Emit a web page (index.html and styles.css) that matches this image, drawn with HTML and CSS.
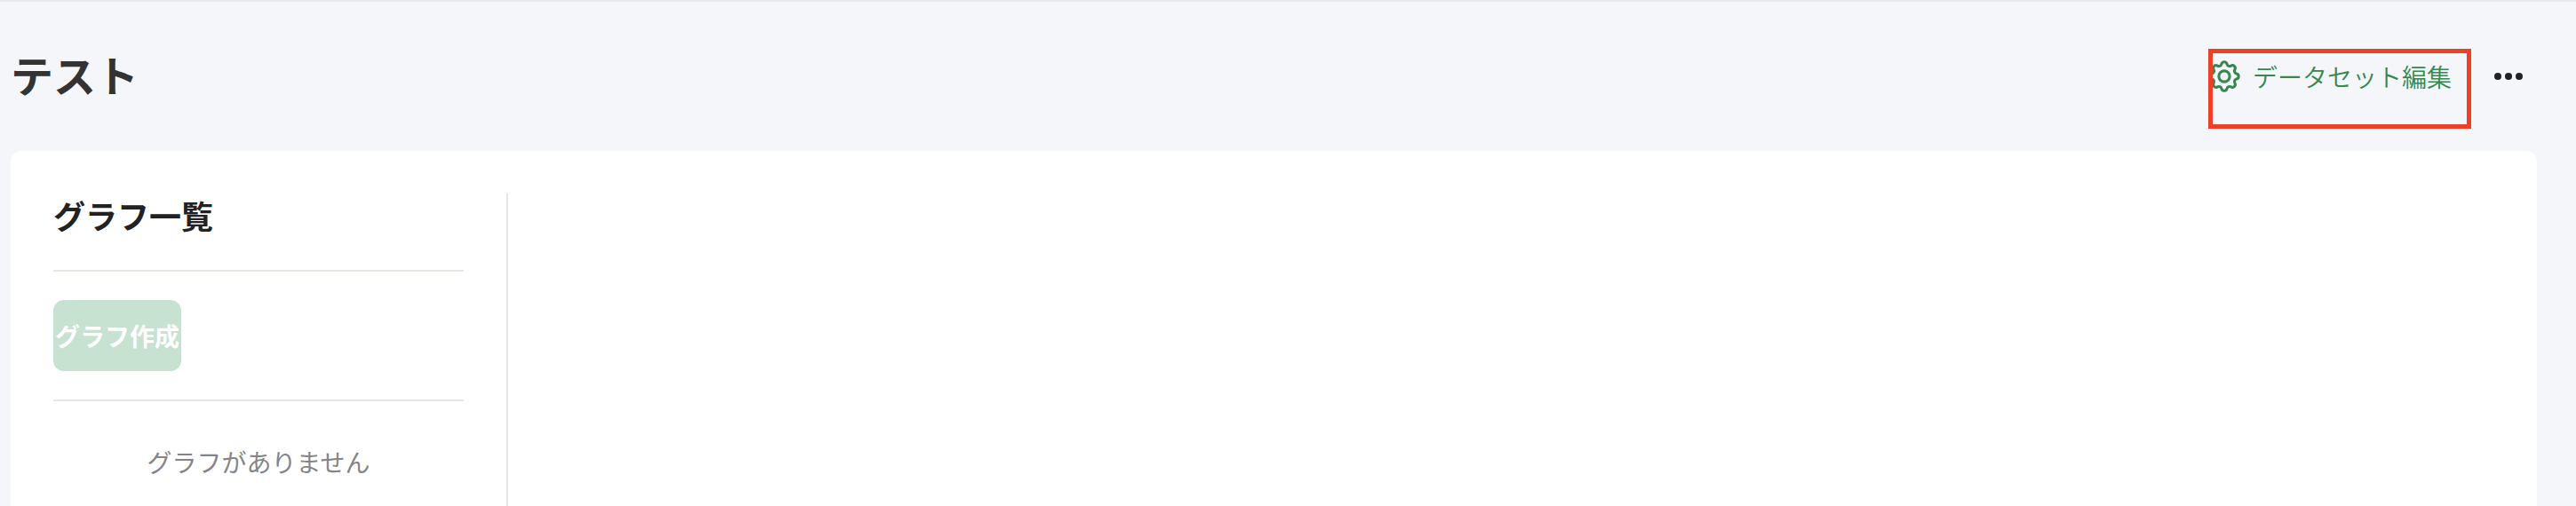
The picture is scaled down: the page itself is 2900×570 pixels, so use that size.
FILE: index.html
```html
<!DOCTYPE html>
<html lang="ja">
<head>
    <meta charset="utf-8">
    <meta name="viewport" content="width=device-width, initial-scale=1">
    <title>テスト</title>
    <link rel="stylesheet" href="styles.css">
</head>
<body>
<header class="page-header">
    <h1>テスト</h1>
    <div class="actions">
        <a href="#" class="edit-link">
            <svg class="gear" viewBox="2 2 20 20" aria-hidden="true">
                <path d="M10.325 4.317c.426-1.756 2.924-1.756 3.35 0a1.724 1.724 0 002.573 1.066c1.543-.94 3.31.826 2.37 2.37a1.724 1.724 0 001.065 2.572c1.756.426 1.756 2.924 0 3.35a1.724 1.724 0 00-1.066 2.573c.94 1.543-.826 3.31-2.37 2.37a1.724 1.724 0 00-2.572 1.065c-.426 1.756-2.924 1.756-3.35 0a1.724 1.724 0 00-2.573-1.066c-1.543.94-3.31-.826-2.37-2.37a1.724 1.724 0 00-1.065-2.572c-1.756-.426-1.756-2.924 0-3.35a1.724 1.724 0 001.066-2.573c-.94-1.543.826-3.31 2.37-2.37.996.608 2.296.07 2.572-1.065z"/>
                <circle cx="12" cy="12" r="3.4"/>
            </svg>
            <span>データセット編集</span>
            <span class="highlight"></span>
        </a>
        <button type="button" class="menu" aria-label="メニュー">
            <svg viewBox="0 0 40 40" aria-hidden="true">
                <circle cx="8" cy="20" r="4"/>
                <circle cx="20" cy="20" r="4"/>
                <circle cx="32" cy="20" r="4"/>
            </svg>
        </button>
    </div>
</header>
<main class="panel">
    <aside class="graph-list">
        <h2>グラフ一覧</h2>
        <div class="create-box">
            <button type="button" class="create" disabled>グラフ作成</button>
        </div>
        <p class="empty">グラフがありません</p>
    </aside>
    <section class="graph-view"></section>
</main>
</body>
</html>
```
FILE: styles.css
```css
* {
    box-sizing: border-box;
}

body {
    display: flex;
    flex-direction: column;
    min-height: 100vh;
    margin: 0;
    padding: 0 44px 0 12px;
    border-top: 2px solid #e8eaea;
    background: #f5f6fa;
    color: #222224;
    font-family: "Noto Sans CJK JP", sans-serif;
    font-size: 28px;
    line-height: 40px;
}

h1, h2, p {
    margin: 0;
}

.page-header {
    display: flex;
    align-items: center;
    justify-content: space-between;
    height: 168px;
    padding-right: 12px;
}

h1 {
    padding-bottom: 6px;
    color: #333;
    font-size: 48px;
    line-height: 72px;
}

.actions {
    display: flex;
    align-items: center;
    gap: 44px;
}

.edit-link {
    position: relative;
    display: flex;
    align-items: center;
    gap: 14px;
    color: #36884f;
    font-weight: 350;
    text-decoration: none;
}

.gear {
    width: 36px;
    height: 36px;
    fill: none;
    stroke: currentColor;
    stroke-width: 1.7;
    stroke-linejoin: round;
}

/* 赤枠 */
.highlight {
    position: absolute;
    top: -11px;
    left: 0;
    right: -22px;
    height: 90px;
    border: 5px solid #ec4126;
}

.menu {
    width: 40px;
    height: 40px;
    padding: 0;
    border: 0;
    background: none;
    color: #222224;
}

.menu svg {
    display: block;
    fill: currentColor;
}

.panel {
    display: flex;
    flex: 1;
    padding: 48px 48px 0;
    border-radius: 12px 12px 0 0;
    background: #fff;
}

.graph-list {
    width: 512px;
    padding-right: 48px;
    border-right: 2px solid #e5e5eb;
}

h2 {
    padding-bottom: 38px;
    font-size: 36px;
    line-height: 48px;
}

.create-box {
    padding: 32px 0;
    border-top: 2px solid #e5e5eb;
    border-bottom: 2px solid #e5e5eb;
}

.create {
    display: block;
    width: 144px;
    height: 80px;
    padding: 0;
    border: 0;
    border-radius: 12px;
    background: #c7e2d1;
    color: #fff;
    font: inherit;
    font-weight: bold;
}

.empty {
    padding-top: 48px;
    color: #858588;
    text-align: center;
}

.graph-view {
    flex: 1;
}
```
